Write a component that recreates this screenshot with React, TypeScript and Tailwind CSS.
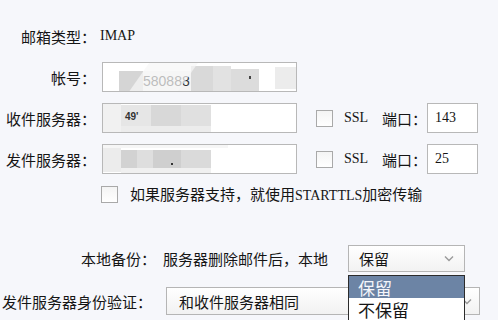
import React from "react";

const cjk = { fontFamily: '"Noto Sans CJK SC", "Noto Sans", sans-serif' };
const serif = { fontFamily: '"Liberation Serif", "Noto Sans CJK SC", serif' };

function Check() {
  return (
    <div className="w-[17px] h-[17px] border border-[#a9a9a9] bg-gradient-to-b from-[#f4f4f4] to-[#ffffff] shrink-0" />
  );
}

function Chevron() {
  return (
    <svg width="10" height="7" viewBox="0 0 10 7" className="shrink-0">
      <polyline points="1,1.5 5,5.5 9,1.5" fill="none" stroke="#9a9a9a" strokeWidth="1.4" />
    </svg>
  );
}

export default function App() {
  return (
    <div
      className="relative w-[498px] h-[320px] overflow-hidden bg-[#f6f7fb] text-[#151515] text-[15px] leading-none"
      style={cjk}
    >
      <div className="flex flex-col">
        {/* Row 1 */}
        <div className="mt-[27px] h-[18px] flex items-center">
          <div className="w-[96px] text-right">邮箱类型：</div>
          <div className="ml-[4px] text-[14px]" style={serif}>IMAP</div>
        </div>

        {/* Row 2 */}
        <div className="mt-[17px] h-[30px] flex items-center">
          <div className="w-[96px] text-right">帐号：</div>
          <div className="relative ml-[6px] w-[195px] h-[30px] border border-[#b8b8b8] bg-white overflow-hidden">
            <div className="absolute left-[16px] top-[8px] w-[24px] h-[20px] bg-[#d5d5d5]" />
            <div className="absolute left-[40px] top-[8px] w-[48px] h-[20px] bg-[#f3f3f3] flex items-center text-[14px] text-[#333]" style={{ fontFamily: '"Liberation Sans", sans-serif' }}>
              580888
            </div>
            <div className="absolute left-[88px] top-[3px] w-[22px] h-[25px] bg-[#d9d9d9]" />
            <div className="absolute left-[110px] top-[3px] w-[18px] h-[25px] bg-[#e2e2e2]" />
            <div className="absolute left-[128px] top-[6px] w-[28px] h-[22px] bg-[#dcdcdc]" />
            <div className="absolute left-[146px] top-[13px] w-[2px] h-[3px] bg-[#444]" />
            <div className="absolute left-[172px] top-[4px] w-[22px] h-[22px] bg-[#ececec]" />
            <div className="absolute left-[40px] top-[-20px] w-[40px] h-[70px] bg-[#f6f6f6] opacity-70 rotate-[35deg]" />
          </div>
        </div>

        {/* Row 3 */}
        <div className="mt-[11px] h-[30px] flex items-center">
          <div className="w-[96px] text-right">收件服务器：</div>
          <div className="relative ml-[6px] w-[195px] h-[30px] border border-[#b8b8b8] bg-white overflow-hidden">
            <div className="absolute left-0 top-0 w-[18px] h-[28px] bg-[#f1f1f1]" />
            <div className="absolute left-[18px] top-[1px] w-[30px] h-[21px] bg-[#e6e6e6]" />
            <div className="absolute left-[48px] top-[1px] w-[30px] h-[21px] bg-[#d8d8d8]" />
            <div className="absolute left-[78px] top-[1px] w-[30px] h-[21px] bg-[#e0e0e0]" />
            <div className="absolute left-[18px] top-[22px] w-[90px] h-[7px] bg-[#ececec]" />
            <div className="absolute left-[22px] top-[8px] text-[10px] text-[#333] font-bold" style={{ fontFamily: '"Liberation Sans", sans-serif' }}>
              49'
            </div>
            <div className="absolute left-[110px] top-[-2px] w-[70px] h-[6px] bg-white" />
          </div>
          <div className="ml-[19px]"><Check /></div>
          <div className="ml-[11px] w-[38px] text-[14px]" style={serif}>SSL</div>
          <div className="w-[45px]">端口：</div>
          <div className="w-[51px] h-[30px] border border-[#b8b8b8] bg-white flex items-center pl-[7px] text-[14px]" style={serif}>
            143
          </div>
        </div>

        {/* Row 4 */}
        <div className="mt-[11px] h-[30px] flex items-center">
          <div className="w-[96px] text-right">发件服务器：</div>
          <div className="relative ml-[6px] w-[195px] h-[30px] border border-[#b8b8b8] bg-white overflow-hidden">
            <div className="absolute left-0 top-[-1px] w-[125px] h-[4px] bg-[#f6f6f6]" />
            <div className="absolute left-0 top-[3px] w-[18px] h-[24px] bg-[#ececec]" />
            <div className="absolute left-[18px] top-[5px] w-[16px] h-[18px] bg-[#d2d2d2]" />
            <div className="absolute left-[34px] top-[5px] w-[16px] h-[18px] bg-[#dedede]" />
            <div className="absolute left-[50px] top-[5px] w-[28px] h-[18px] bg-[#cfcfcf]" />
            <div className="absolute left-[78px] top-[5px] w-[30px] h-[18px] bg-[#dadada]" />
            <div className="absolute left-[18px] top-[23px] w-[90px] h-[6px] bg-[#f0f0f0]" />
            <div className="absolute left-[68px] top-[18px] w-[2px] h-[2px] bg-[#333]" />
          </div>
          <div className="ml-[19px]"><Check /></div>
          <div className="ml-[11px] w-[38px] text-[14px]" style={serif}>SSL</div>
          <div className="w-[45px]">端口：</div>
          <div className="w-[51px] h-[30px] border border-[#b8b8b8] bg-white flex items-center pl-[7px] text-[14px]" style={serif}>
            25
          </div>
        </div>

        {/* Row 5 */}
        <div className="mt-[12px] h-[17px] flex items-center">
          <div className="ml-[101px]"><Check /></div>
          <div className="ml-[12px] whitespace-nowrap">
            如果服务器支持，就使用<span className="text-[14px]" style={serif}>STARTTLS</span>加密传输
          </div>
        </div>

        {/* Row 6 */}
        <div className="mt-[42px] h-[27px] flex items-center">
          <div className="w-[156px] text-right">本地备份：</div>
          <div className="ml-[7px] w-[185px] whitespace-nowrap">服务器删除邮件后，本地</div>
          <div className="relative w-[117px] h-[27px]">
            <div className="w-full h-full border border-[#b5b5b5] bg-gradient-to-b from-[#ffffff] to-[#f2f2f2] flex items-center justify-between pl-[10px] pr-[10px]">
              <span>保留</span>
              <Chevron />
            </div>
            <div className="absolute left-0 top-[30px] w-[117px] h-[48px] border border-[#2b2b2b] bg-white z-10 text-[17px]">
              <div className="h-[22px] bg-[#6c84a5] text-[#f4f6fa] flex items-center pl-[9px]">保留</div>
              <div className="h-[22px] flex items-center pl-[9px]">不保留</div>
            </div>
          </div>
        </div>

        {/* Row 7 */}
        <div className="mt-[15px] h-[28px] flex items-center">
          <div className="w-[152px] text-right whitespace-nowrap">发件服务器身份验证：</div>
          <div className="ml-[14px] w-[314px] h-[28px] border border-[#b5b5b5] bg-gradient-to-b from-[#ffffff] to-[#f2f2f2] flex items-center justify-between pl-[12px] pr-[7px]">
            <span>和收件服务器相同</span>
            <Chevron />
          </div>
        </div>
      </div>
    </div>
  );
}
